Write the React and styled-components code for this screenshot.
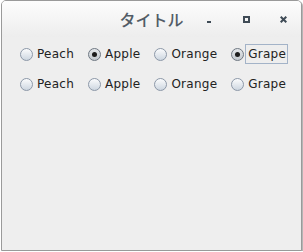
import React from "react";
import styled, { createGlobalStyle, css } from "styled-components";

const GlobalStyle = createGlobalStyle`
  html, body { margin: 0; padding: 0; background: #ffffff; }
  body { font-family: "DejaVu Sans", "Noto Sans CJK JP", sans-serif; }
`;

const Window = styled.div`
  margin-left: 1px;
  width: 299px;
  height: 249px;
  border: 1px solid #9a9a9a;
  border-radius: 5px 5px 0 0;
  box-shadow: 1px 1px 0 #b5b5b5;
  background: #eeeeee;
  display: flex;
  flex-direction: column;
  overflow: hidden;
`;

const TitleBar = styled.div`
  height: 36px;
  flex: none;
  display: grid;
  grid-template-columns: 1fr auto 1fr;
  align-items: center;
  background: linear-gradient(#fdfdfd, #ededed);
`;

const Title = styled.div`
  grid-column: 2;
  font-family: "Noto Sans CJK JP", "Noto Sans", sans-serif;
  font-size: 16px;
  font-weight: 500;
  color: #525c66;
  line-height: 20px;
  margin-top: -1px;
`;

const Controls = styled.div`
  grid-column: 3;
  justify-self: end;
  display: flex;
`;

const ControlButton = styled.div`
  width: 36px;
  height: 36px;
  display: flex;
  align-items: center;
  justify-content: center;
  color: #3f4b56;
`;

const Content = styled.div`
  display: flex;
  flex-direction: column;
  gap: 10px;
  padding: 7px 0 0 18px;
`;

const Row = styled.div`
  display: flex;
  align-items: center;
  height: 20px;
`;

const Item = styled.label`
  display: flex;
  align-items: center;
  gap: 1px;
  margin-right: 12px;
  font-size: 12px;
  letter-spacing: 0.25px;
  color: #222222;
`;

const Circle = styled.span`
  box-sizing: border-box;
  width: 13px;
  height: 13px;
  border-radius: 50%;
  border: 1px solid #8c98a8;
  background: linear-gradient(#fbfcfd, #cdd6e0);
  display: flex;
  align-items: center;
  justify-content: center;
  ${(p) =>
    p.$checked &&
    css`
      background: linear-gradient(#e4e7ea, #c3c9cf);
      border-color: #6f7883;
      &::after {
        content: "";
        width: 5px;
        height: 5px;
        border-radius: 50%;
        background: #1c1c1c;
      }
    `}
`;

const Text = styled.span`
  padding: 2px 1px 2px 2px;
  border: 1px solid ${(p) => (p.$focused ? "#a3b3c8" : "transparent")};
  line-height: 14px;
`;

const fruits = ["Peach", "Apple", "Orange", "Grape"];

function Radio({ label, checked, focused }) {
  return (
    <Item>
      <Circle $checked={checked} />
      <Text $focused={focused}>{label}</Text>
    </Item>
  );
}

export default function App() {
  const rows = [
    { checked: ["Apple", "Grape"], focused: "Grape" },
    { checked: [], focused: null },
  ];
  return (
    <>
      <GlobalStyle />
      <Window>
        <TitleBar>
          <Title>タイトル</Title>
          <Controls>
            <ControlButton>
              <svg width="7" height="7" viewBox="0 0 7 7" style={{ marginLeft: -3 }}>
                <rect x="1" y="5" width="4" height="2" fill="currentColor" />
              </svg>
            </ControlButton>
            <ControlButton>
              <svg width="7" height="7" viewBox="0 0 7 7" style={{ marginLeft: -1 }}>
                <rect x="1" y="1" width="5" height="5" fill="none" stroke="currentColor" strokeWidth="2" />
              </svg>
            </ControlButton>
            <ControlButton>
              <svg width="7" height="7" viewBox="0 0 7 7">
                <path d="M0.7 0.7 L6.3 6.3 M6.3 0.7 L0.7 6.3" stroke="currentColor" strokeWidth="2" />
              </svg>
            </ControlButton>
          </Controls>
        </TitleBar>
        <Content>
          {rows.map((r, i) => (
            <Row key={i}>
              {fruits.map((f) => (
                <Radio
                  key={f}
                  label={f}
                  checked={r.checked.includes(f)}
                  focused={r.focused === f}
                />
              ))}
            </Row>
          ))}
        </Content>
      </Window>
    </>
  );
}
